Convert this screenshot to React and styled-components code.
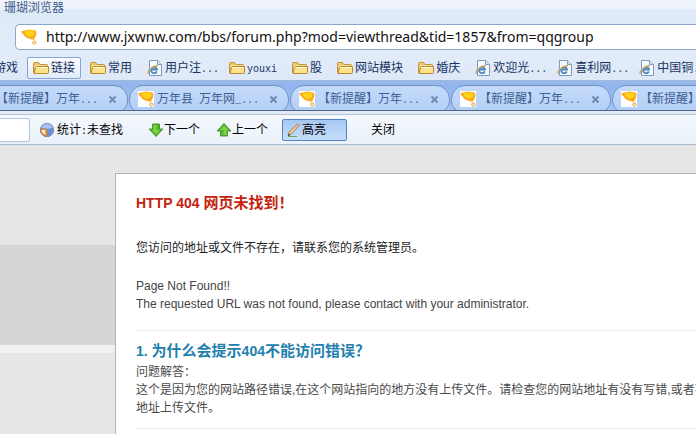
import { useState } from 'react';
import styled, { createGlobalStyle } from 'styled-components'

const bookmarks = [
  { name: '游戏', type: 'folder' },
  { name: '链接', type: 'folder', active: true },
  { name: '常用', type: 'folder' },
  { name: '用户注', type: 'page', cut: true },
  { name: '', latin: 'youxi', type: 'folder' },
  { name: '股', type: 'folder' },
  { name: '网站模块', type: 'folder' },
  { name: '婚庆', type: 'folder' },
  { name: '欢迎光', type: 'page', cut: true },
  { name: '喜利网', type: 'page', cut: true },
  { name: '中国铜', type: 'page', cut: true },
]

const tabs = [
  { id: 1, name: '【新提醒】万年', tail: '...' },
  { id: 2, name: '万年县', second: '万年网', tail: '_...' },
  { id: 3, name: '【新提醒】万年', tail: '...' },
  { id: 4, name: '【新提醒】万年', tail: '...' },
  { id: 5, name: '【新提醒】万年', tail: '...' },
]

const SiteIcon = () => (
  <Icon viewBox='0 0 16 16' aria-hidden='true'>
    <rect width='16' height='16' fill='#fff' />
    <path d='M.5 3.600C0 2.200 2 1.200 4.300 1.600 6.500 .3 9.500 .2 11.500 1 14.500 1 16 2.400 15.300 4.800 14.800 7.200 14 9 13 10.600 11.500 11 9.500 9.800 7.500 9.500 4.300 9 3.300 6 .5 3.600Z' fill='#f9a91a' />
    <path d='M3.500 3C6 .8 12 .8 13.500 2.800 14 5.500 11.500 8 8.500 7.700 5.500 7.200 4.500 5 3.500 3Z' fill='#ffd01c' />
    <circle cx='13.300' cy='13.500' r='1.600' fill='#fff3cf' stroke='#f29a2c' />
  </Icon>
)

const FolderIcon = () => (
  <Icon viewBox='0 0 16 16' aria-hidden='true'>
    <path d='M.5 12.500V3.500Q.5 2.500 1.500 2.500H5.500L7 4.500H13.500Q14.500 4.500 14.500 5.500V13.500H1.500Z' fill='#efc967' stroke='#c0943a' />
    <path d='M2 5.500H13.500V8H2Z' fill='#fff8dc' />
    <path d='M1 13.500 2.500 7.500Q2.700 6.500 3.700 6.500H15.500V12.500Q15.500 13.500 14.500 13.500Z' fill='#fbe38c' stroke='#b8862c' />
    <path d='M3.500 7.500H14.500' stroke='#fffbe0' />
  </Icon>
)

const PageIcon = () => (
  <Icon viewBox='0 0 16 16' aria-hidden='true'>
    <path d='M2.500.5H10.500L14.500 4.500V15.500H2.500Z' fill='#f6faff' stroke='#8399b8' />
    <path d='M10.500.5V4.500H14.500' fill='#d5e3f4' stroke='#8399b8' />
    <path d='M9.800 11.500A3 3 0 1 1 10 9.500H5' fill='none' stroke='#4b86bd' strokeWidth='1.800' />
    <path d='M1.500 14C-.5 11.500 5 5.800 11 5.500' fill='none' stroke='#c9a95c' strokeWidth='1.300' />
  </Icon>
)

const StatIcon = () => (
  <Icon viewBox='0 0 16 16' aria-hidden='true'>
    <circle cx='8' cy='8' r='6.700' fill='#6b90d8' stroke='#8090b8' />
    <path d='M2.500 5.800Q4 2 8 2T13.500 5.800Q8 8 2.500 5.800Z' fill='#a9c3f2' />
    <path d='M1.500 7H8V14.500Q2 14 1.500 7Z' fill='#f0a445' stroke='#b08050' />
    <path d='M2.500 8H6V12L4 11.500Z' fill='#fdf0d4' />
  </Icon>
)

const ArrowIcon = ({ up }) => (
  <Icon viewBox='0 0 16 16' aria-hidden='true'>
    <g transform={up ? 'rotate(180 8 8)' : undefined}>
      <path d='M4.500 2H11.500V7H15L8 14.500 1 7H4.500Z' fill='#54b62c' stroke='#4a9a2c' strokeLinejoin='round' />
      <path d='M5.500 3H8.500V8H12L8 12 3.500 8H5.500Z' fill='#7fd14c' />
    </g>
  </Icon>
)

const PencilIcon = () => (
  <Icon viewBox='0 0 16 16' aria-hidden='true'>
    <path d='M2 14.500H11' stroke='#6aaa4c' />
    <path d='M2 13.800 3.200 10 11 2.200Q12.500 1.400 13.400 3.200L5.400 12Z' fill='#f2cf85' stroke='#8c744c' strokeWidth='.8' />
    <path d='M10 3.200 11.200 2Q12.800 1.600 13.300 3.200L12 4.800Z' fill='#e79a8c' />
    <path d='M2 14 2.800 11.500 4.500 13Z' fill='#4c4030' />
  </Icon>
)

const App = () => {
  const [url, setUrl] = useState('http://www.jxwnw.com/bbs/forum.php?mod=viewthread&tid=1857&from=qqgroup');
  const [search, setSearch] = useState('');
  const [highlight, setHighlight] = useState(true);
  const [openTabs, setOpenTabs] = useState(tabs);

  const closeTab = (id) => {
    setOpenTabs((prev) => prev.filter(item => item.id !== id))
  }

  return (
    <>
      <GlobalStyle />
      <Chrome>
        <TitleBar>珊瑚浏览器</TitleBar>
        <AddressBar>
          <SiteIcon />
          <AddressInput aria-label='地址' value={url} onChange={(e) => setUrl(e.target.value)} />
        </AddressBar>
        <Bookmarks>
          {
            bookmarks.map(item => (
              <Bookmark key={item.name + item.type} href='#' $active={item.active}>
                {item.type === 'folder' ? <FolderIcon /> : <PageIcon />}
                <BookmarkName $cut={item.cut}>
                  {item.name}
                  {item.latin && <Narrow>{item.latin}</Narrow>}
                  {item.cut && <Narrow>...</Narrow>}
                </BookmarkName>
              </Bookmark>
            ))
          }
        </Bookmarks>
      </Chrome>
      <TabStrip>
        {
          openTabs.map(item => (
            <Tab key={item.id}>
              <SiteIcon />
              <TabName>
                {item.name}
                {item.second && <><Narrow> </Narrow>{item.second}</>}
                <Narrow>{item.tail}</Narrow>
              </TabName>
              <CloseButton aria-label='关闭标签' onClick={() => closeTab(item.id)}>
                <CloseMark viewBox='0 0 9 9'>
                  <path d='M1.500 1.500 7.500 7.500M7.500 1.500 1.500 7.500' stroke='#6d8bb5' strokeWidth='2' />
                </CloseMark>
              </CloseButton>
            </Tab>
          ))
        }
      </TabStrip>
      <FindBar>
        <FindInput aria-label='查找' value={search} onChange={(e) => setSearch(e.target.value)} />
        <FindStatus><StatIcon /><span>统计<Narrow>:</Narrow>未查找</span></FindStatus>
        <FindButtons>
          <FindButton><ArrowIcon />下一个</FindButton>
          <FindButton><ArrowIcon up />上一个</FindButton>
          <ToggleButton $on={highlight} aria-pressed={highlight} onClick={() => setHighlight(!highlight)}>
            <PencilIcon />高亮
          </ToggleButton>
          <TextButton>关闭</TextButton>
        </FindButtons>
      </FindBar>
      <Page>
        <Card>
          <Title><Latin>HTTP 404 </Latin>网页未找到！</Title>
          <Message>您访问的地址或文件不存在，请联系您的系统管理员。</Message>
          <English>
            Page Not Found!!<br />
            The requested URL was not found, please contact with your administrator.
          </English>
          <Question>
            <QuestionTitle><Latin>1. </Latin>为什么会提示<Latin>404</Latin>不能访问错误？</QuestionTitle>
            <Answer>问题解答：</Answer>
            <Answer>
              这个是因为您的网站路径错误,在这个网站指向的地方没有上传文件。请检查您的网站地址有没有写错,或者不<br />
              地址上传文件。
            </Answer>
          </Question>
          <Question />
        </Card>
      </Page>
    </>
  )
}

export default App

const GlobalStyle = createGlobalStyle`
  * {
    box-sizing: border-box;
  }

  html, body, #root {
    height: 100%;
  }

  body {
    margin: 0;
    overflow: hidden;
    font: 12px/18px 'Liberation Sans', 'Noto Sans CJK SC', sans-serif;
  }

  #root {
    display: flex;
    flex-direction: column;
  }

  button, input {
    font: inherit;
    color: inherit;
  }
`

const Icon = styled.svg`
  width: 16px;
  height: 16px;
  flex: none;
`

const Narrow = styled.span`
  font-family: 'Liberation Mono', monospace;
  font-size: 10px;
  line-height: 10px;
  white-space: pre;
`

const Latin = styled.span`
  font-size: 14px;
`

const Chrome = styled.header`
  flex: none;
  background: linear-gradient(#f0f4fb 0, #ebf1fa 9px, #dfeaf8 10px, #e2ecf9 54px, #dfe8f7 100%);
`

const TitleBar = styled.div`
  height: 24px;
  padding-left: 4px;
  line-height: 16px;
  color: #405a86;
`

const AddressBar = styled.div`
  display: flex;
  align-items: center;
  gap: 9px;
  height: 26px;
  margin-left: 15px;
  padding-left: 5px;
  background: #fff;
  border: 1px solid #8ba5cb;
  border-right: 0;
  border-radius: 5px 0 0 5px;
`

const AddressInput = styled.input`
  flex: 1;
  min-width: 0;
  padding: 0;
  border: 0;
  outline: 0;
  background: none;
  color: #111;
  font: 14px/20px 'Noto Sans', sans-serif;
`

const Bookmarks = styled.nav`
  display: flex;
  align-items: center;
  gap: 3px;
  height: 30px;
  margin-left: -30px;
  padding-top: 6px;
  overflow: hidden;
`

const Bookmark = styled.a`
  display: flex;
  align-items: center;
  gap: 2px;
  flex: none;
  height: 22px;
  padding: 0 5px;
  border: 1px solid ${props => props.$active ? '#86a5d6' : 'transparent'};
  border-radius: 2px;
  background: ${props => props.$active ? 'linear-gradient(#fff, #dfeafa)' : 'none'};
  color: #17335f;
  text-decoration: none;
`

const BookmarkName = styled.span`
  margin-right: ${props => props.$cut ? '-5px' : '0'};
  white-space: nowrap;
`

const TabStrip = styled.div`
  display: flex;
  flex: none;
  gap: 1px;
  height: 31px;
  padding-top: 5px;
  overflow: hidden;
  background: linear-gradient(#9cb9e3, #8fb6ee 6px, #a6c6f3);
  border-bottom: 1px solid #4f6488;
`

const Tab = styled.div`
  display: flex;
  align-items: center;
  gap: 3px;
  flex: none;
  width: 160px;
  height: 28px;
  padding: 0 10px 0 8px;
  border: 1px solid #7092c8;
  border-radius: 14px 14px 12px 12px;
  background: linear-gradient(#c4dafa, #b3cff6);
  color: #3f5f92;

  &:first-child {
    margin-left: -32px;
  }
`

const TabName = styled.span`
  flex: 1;
  white-space: nowrap;
`

const CloseButton = styled.button`
  display: flex;
  padding: 0;
  border: 0;
  background: none;
`

const CloseMark = styled.svg`
  width: 9px;
  height: 9px;
`

const FindBar = styled.div`
  display: flex;
  align-items: center;
  flex: none;
  height: 34px;
  padding-top: 4px;
  border-bottom: 1px solid #a9bad3;
  background: linear-gradient(#e3ebf7 3px, #b4c3da 3px, #b4c3da 4px, #f5f9fe 4px, #eaf1fa);
  color: #000;
`

const FindInput = styled.input`
  width: 30px;
  height: 24px;
  border: 1px solid #b0c4de;
  border-left: 0;
  border-radius: 0 3px 3px 0;
  background: #fff;
`

const FindStatus = styled.div`
  display: flex;
  align-items: center;
  gap: 2px;
  margin: 0 25px 0 9px;
`

const FindButtons = styled.div`
  display: flex;
  align-items: center;
  gap: 16px;
`

const FindButton = styled.button`
  display: flex;
  align-items: center;
  padding: 0;
  border: 0;
  background: none;
`

const ToggleButton = styled(FindButton)`
  width: 65px;
  height: 22px;
  margin-left: -2px;
  padding: 0 3px;
  border: 1px solid ${props => props.$on ? '#5583bd' : 'transparent'};
  border-radius: 2px;
  background: ${props => props.$on ? 'linear-gradient(#a6c8f2, #c6defa)' : 'none'};
`

const TextButton = styled(FindButton)`
  padding: 0 8px;
`

const Page = styled.main`
  flex: 1;
  display: flex;
  min-height: 0;
  padding: 28px 0 0 115px;
  overflow: hidden;
  background: linear-gradient(#e6e6e6 100px, #d6d6d6 100px, #d6d6d6 200px, #f1f1f1 200px, #f1f1f1 208px, #e6e6e6 208px);
`

const Card = styled.article`
  flex: 1;
  min-width: 0;
  padding: 19px 0 0 20px;
  border: solid #b2b2b2;
  border-width: 1px 0 0 1px;
  background: #fff;
  color: #4a4a4a;
  white-space: nowrap;
`

const Title = styled.h1`
  margin: 0 0 26px;
  font-size: 15px;
  line-height: 20px;
  color: #c5220f;
`

const Message = styled.p`
  margin: 0 0 20px;
  color: #222;
`

const English = styled.p`
  margin: 0 0 17px;
  color: #444;
`

const Question = styled.section`
  padding: 10px 0 11px;
  border-top: 1px solid #ebebeb;
`

const QuestionTitle = styled.h2`
  margin: 0 0 2px;
  font-size: 15px;
  line-height: 20px;
  color: #1f80ae;
`

const Answer = styled.p`
  margin: 0;
`
